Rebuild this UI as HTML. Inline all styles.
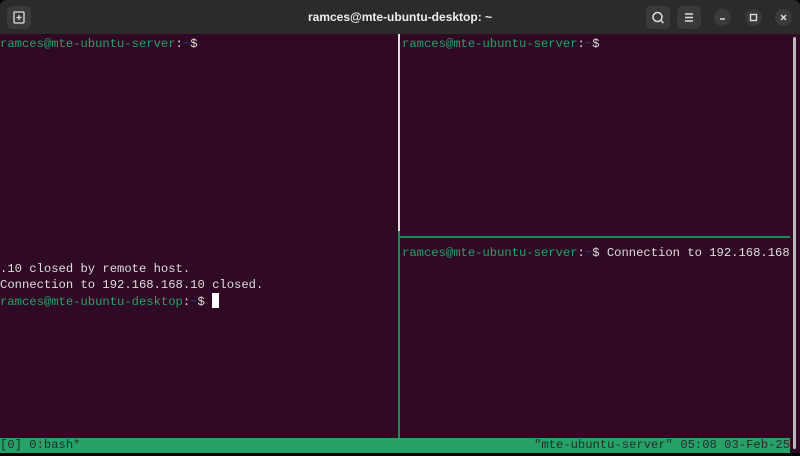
<!DOCTYPE html>
<html><head><style>
*{margin:0;padding:0;box-sizing:border-box}
body{width:800px;height:456px;background:#000;overflow:hidden;position:relative;font-family:"Liberation Mono",monospace;font-size:12.2px}
#tb{position:absolute;left:0;top:0;width:800px;height:34px;background:#2b2b2b;border-radius:6px 6px 0 0}
#title{position:absolute;left:0;right:0;top:10px;text-align:center;color:#eee;font-family:"Liberation Sans",sans-serif;font-size:12px;font-weight:600}
.btn{position:absolute;top:6px;width:24px;height:23px;background:#3a3a3a;border-radius:5px}
.cb{position:absolute;top:9px;width:17px;height:17px;background:#3a3a3a;border-radius:50%}
#term{position:absolute;left:0;top:34px;width:800px;height:419px;background:#300a24}
.l{position:absolute;white-space:pre;color:#ddd;line-height:16px;height:16px}
.g{color:#26a269}.b{color:#12488b}
#st{position:absolute;left:0;top:438px;width:790px;height:15px;background:#26a269;color:#2a2a2a;line-height:15px}
</style></head><body>
<div id="tb">
<div class="btn" style="left:7px"><svg width="24" height="23"><rect x="7" y="6" width="10" height="11" rx="1" fill="none" stroke="#ddd" stroke-width="1.3"/><path d="M12 9v5M9.5 11.5h5" stroke="#ddd" stroke-width="1.3"/></svg></div>
<div id="title">ramces@mte-ubuntu-desktop: ~</div>
<div class="btn" style="left:646px"><svg width="24" height="23"><circle cx="11.5" cy="11" r="4.5" fill="none" stroke="#ddd" stroke-width="1.5"/><path d="M14.5 14l3 3" stroke="#ddd" stroke-width="1.5"/></svg></div>
<div class="btn" style="left:677px"><svg width="24" height="23"><path d="M8 8h8M8 11.5h8M8 15h8" stroke="#ddd" stroke-width="1.4"/></svg></div>
<div class="cb" style="left:714px"><svg width="17" height="17"><path d="M6 10h5" stroke="#ddd" stroke-width="1.5"/></svg></div>
<div class="cb" style="left:745px"><svg width="17" height="17"><rect x="5.5" y="5.5" width="6" height="6" fill="none" stroke="#ddd" stroke-width="1.4"/></svg></div>
<div class="cb" style="left:775px"><svg width="17" height="17"><path d="M6 6l5 5M11 6l-5 5" stroke="#ddd" stroke-width="1.5"/></svg></div>
</div>
<div id="term"></div>
<div class="l" style="left:0;top:36px"><span class="g">ramces@mte-ubuntu-server</span>:<span class="b">~</span>$</div>
<div class="l" style="left:402px;top:36px"><span class="g">ramces@mte-ubuntu-server</span>:<span class="b">~</span>$</div>
<div class="l" style="left:0;top:261px">.10 closed by remote host.</div>
<div class="l" style="left:0;top:277px">Connection to 192.168.168.10 closed.</div>
<div class="l" style="left:0;top:293px"><span class="g">ramces@mte-ubuntu-desktop</span>:<span class="b">~</span>$ <span style="display:inline-block;width:7px;height:15px;background:#fff;vertical-align:-3px"></span></div>
<div class="l" style="left:402px;top:245px"><span class="g">ramces@mte-ubuntu-server</span>:<span class="b">~</span>$ Connection to 192.168.168</div>
<div style="position:absolute;left:398px;top:34px;width:1.5px;height:197px;background:#ddd"></div>
<div style="position:absolute;left:398px;top:231px;width:1.5px;height:207px;background:#1f8a58"></div>
<div style="position:absolute;left:398px;top:236px;width:392px;height:1.5px;background:#1f8a58"></div>
<div style="position:absolute;left:793px;top:37px;width:3px;height:412px;background:#bbb;border-radius:2px"></div>
<div id="st"><span style="position:absolute;left:0">[0] 0:bash*</span><span style="position:absolute;right:0">"mte-ubuntu-server" 05:08 03-Feb-25</span></div>
</body></html>
